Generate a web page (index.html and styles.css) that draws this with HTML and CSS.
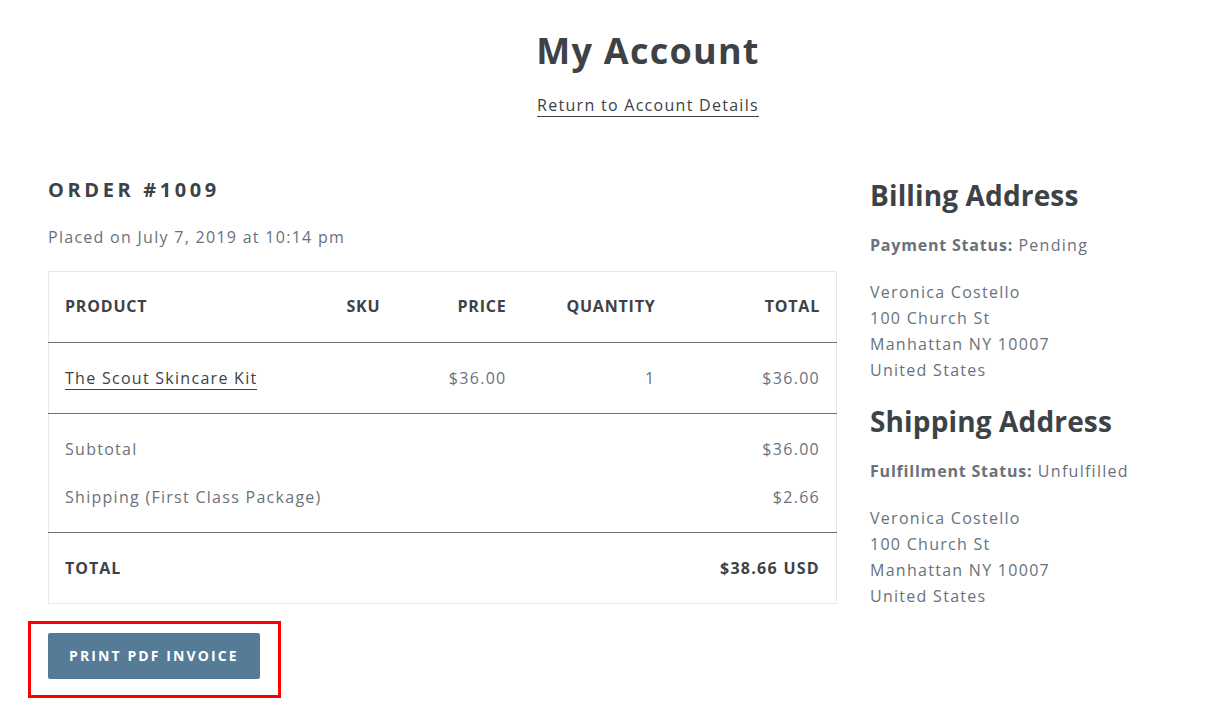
FILE: index.html
```html
<!DOCTYPE html>
<html lang="en">
<head>
    <meta charset="UTF-8">
    <meta name="viewport" content="width=device-width, initial-scale=1.0">
    <title>My Account</title>
    <link rel="stylesheet" href="styles.css">
</head>
<body>
    <div class="page-width">
        <header class="section-header">
            <h1>My Account</h1>
            <a href="#" class="text-link">Return to Account Details</a>
        </header>

        <div class="grid">
            <div class="order-col">
                <h2 class="order-title">Order #1009</h2>
                <p class="placed">Placed on July 7, 2019 at 10:14 pm</p>

                <table class="order-table">
                    <colgroup>
                        <col class="c-product">
                        <col class="c-sku">
                        <col class="c-price">
                        <col class="c-qty">
                        <col class="c-total">
                    </colgroup>
                    <thead>
                        <tr>
                            <th>Product</th>
                            <th>SKU</th>
                            <th class="right">Price</th>
                            <th class="right">Quantity</th>
                            <th class="right">Total</th>
                        </tr>
                    </thead>
                    <tbody>
                        <tr>
                            <td><a href="#" class="text-link">The Scout Skincare Kit</a></td>
                            <td></td>
                            <td class="right">$36.00</td>
                            <td class="right">1</td>
                            <td class="right">$36.00</td>
                        </tr>
                    </tbody>
                    <tfoot>
                        <tr class="first">
                            <td colspan="4">Subtotal</td>
                            <td class="right">$36.00</td>
                        </tr>
                        <tr class="last">
                            <td colspan="4">Shipping (First Class Package)</td>
                            <td class="right">$2.66</td>
                        </tr>
                        <tr class="grand">
                            <td colspan="4">Total</td>
                            <td class="right">$38.66 USD</td>
                        </tr>
                    </tfoot>
                </table>

                <div class="highlight">
                    <a href="#" class="btn">Print PDF Invoice</a>
                </div>
            </div>

            <div class="address-col">
                <h3>Billing Address</h3>
                <p class="status"><strong>Payment Status:</strong> Pending</p>
                <p class="address">Veronica Costello<br>100 Church St<br>Manhattan NY 10007<br>United States</p>

                <h3>Shipping Address</h3>
                <p class="status"><strong>Fulfillment Status:</strong> Unfulfilled</p>
                <p class="address">Veronica Costello<br>100 Church St<br>Manhattan NY 10007<br>United States</p>
            </div>
        </div>
    </div>
</body>
</html>
```

FILE: styles.css
```css
body {
    margin: 0;
    font-family: 'Open Sans', 'Liberation Sans', sans-serif;
    font-size: 16px;
    line-height: 1.5;
    letter-spacing: 0.08em;
    color: #69727b;
    background: #fff;
}
.page-width {
    padding: 0 48px;
}
.section-header {
    text-align: center;
    padding: 28px 0 0 81px;
}
h1 {
    margin: 0 0 18px;
    font-size: 36px;
    line-height: 1.3;
    font-weight: 700;
    letter-spacing: 0.035em;
    color: #3d4246;
}
.text-link {
    color: #3d4246;
    text-decoration: none;
    border-bottom: 1px solid #3d4246;
}
.grid {
    display: grid;
    grid-template-columns: 788px 1fr;
    column-gap: 34px;
    margin-top: 58px;
}
.order-title {
    margin: 0;
    font-size: 20px;
    line-height: 30px;
    letter-spacing: 0.18em;
    text-transform: uppercase;
    color: #3d4246;
    font-weight: 700;
}
.placed {
    margin: 20px 0 22px;
}
.order-table {
    width: 100%;
    border-collapse: collapse;
    border: 1px solid #e8e9eb;
    table-layout: fixed;
}
.c-product { width: 282px; }
.c-sku { width: 96px; }
.c-price { width: 96px; }
.c-qty { width: 149px; }
.c-total { width: 165px; }
.order-table th,
.order-table td {
    padding: 23px 16px 23px;
    text-align: left;
    line-height: 24px;
}
.order-table th {
    padding: 22px 16px 24px;
    color: #3d4246;
    font-weight: 700;
    text-transform: uppercase;
    font-size: 16px;
    letter-spacing: 0.05em;
}
.order-table thead tr,
.order-table tbody tr {
    border-bottom: 1px solid #69727b;
}
.order-table .right {
    text-align: right;
}
.order-table tfoot td {
    padding: 12px 16px;
}
.order-table tfoot tr.first td {
    padding-top: 23px;
}
.order-table tfoot tr.last td {
    padding-bottom: 23px;
}
.order-table tfoot tr.last {
    border-bottom: 1px solid #69727b;
}
.order-table tfoot tr.grand td {
    padding: 23px 16px 23px;
    color: #3d4246;
    font-weight: 700;
    letter-spacing: 0.06em;
    text-transform: uppercase;
}
.order-table tfoot tr.grand td.right {
    text-transform: none;
    letter-spacing: 0.08em;
}
.highlight {
    display: inline-block;
    margin: 17px 0 0 -20px;
    padding: 9px 18px 16px 17px;
    border: 3px solid #ff0000;
}
.btn {
    display: inline-block;
    padding: 11px 21px;
    background: #557b97;
    color: #fff;
    border-radius: 2px;
    font-size: 14px;
    line-height: 24px;
    font-weight: 700;
    letter-spacing: 0.15em;
    text-transform: uppercase;
    text-decoration: none;
}
.address-col h3 {
    margin: 0;
    font-size: 28px;
    line-height: 40px;
    font-weight: 700;
    letter-spacing: 0.005em;
    color: #3d4246;
}
.address-col h3 + .status {
    margin-top: 18px;
}
.status {
    margin: 0 0 22px;
}
.status strong {
    color: #69727b;
    letter-spacing: 0.05em;
}
.address {
    margin: 0 0 18px;
    line-height: 26px;
}
```
